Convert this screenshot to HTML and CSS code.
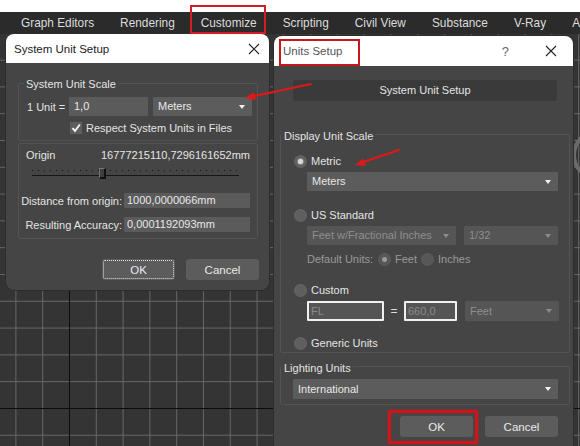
FILE: index.html
```
<!DOCTYPE html>
<html>
<head>
<meta charset="utf-8">
<link rel="stylesheet" href="styles.css">
</head>
<body>
<div class="topstrip"></div>
<nav class="menu">
  <span>Graph Editors</span>
  <span>Rendering</span>
  <span class="marked">Customize</span>
  <span>Scripting</span>
  <span>Civil View</span>
  <span>Substance</span>
  <span>V-Ray</span>
  <span>A</span>
</nav>
<div class="viewport">
  <div class="axis-v"></div>
  <div class="axis-h"></div>

  <section class="dlg dlg1">
    <header class="titlebar">
      <span class="title">System Unit Setup</span>
      <svg class="xicon" width="12" height="12" viewBox="0 0 12 12"><path d="M1 1L11 11M11 1L1 11" stroke="#222" stroke-width="1.1" fill="none"/></svg>
    </header>
    <div class="body1">
      <div class="group g1">
        <div class="glabel">System Unit Scale</div>
        <div class="row unit-row">
          <span class="unit-lbl">1 Unit =</span>
          <div class="field f-unit">1,0</div>
          <div class="combo c-meters">Meters<i class="tri"></i></div>
        </div>
        <div class="row check-row">
          <span class="cbox"><svg width="12" height="12" viewBox="0 0 12 12"><path d="M2.5 6.2L5 9L9.8 2.5" stroke="#f0f0f0" stroke-width="2" fill="none"/></svg></span>
          <span>Respect System Units in Files</span>
        </div>
      </div>
      <div class="group g2">
        <div class="row origin-row">
          <span>Origin</span>
          <span>16777215110,7296161652mm</span>
        </div>
        <div class="slider">
          <div class="dots"></div>
          <div class="track"></div>
          <div class="thumb"></div>
        </div>
        <div class="row info-row r-dist">
          <span class="info-lbl">Distance from origin:</span>
          <div class="field f-info">1000,0000066mm</div>
        </div>
        <div class="row info-row r-acc">
          <span class="info-lbl">Resulting Accuracy:</span>
          <div class="field f-info">0,0001192093mm</div>
        </div>
      </div>
      <div class="buttons b1">
        <button class="btn focus">OK</button>
        <button class="btn">Cancel</button>
      </div>
    </div>
  </section>

  <section class="dlg dlg2">
    <header class="titlebar tb2">
      <span class="title">Units Setup</span>
      <span class="help">?</span>
      <svg class="xicon x2" width="12" height="12" viewBox="0 0 12 12"><path d="M1 1L11 11M11 1L1 11" stroke="#222" stroke-width="1.1" fill="none"/></svg>
    </header>
    <div class="body2">
      <div class="sus-btn">System Unit Setup</div>
      <div class="group g3">
        <div class="glabel">Display Unit Scale</div>
        <div class="row radio-row r-metric"><span class="radio on"></span><span>Metric</span></div>
        <div class="combo c-wide">Meters<i class="tri"></i></div>
        <div class="row radio-row r-us"><span class="radio"></span><span>US Standard</span></div>
        <div class="row sub-row r-feet">
          <div class="combo dis c-frac">Feet w/Fractional Inches<i class="tri dim"></i></div>
          <div class="combo dis c-small">1/32<i class="tri dim"></i></div>
        </div>
        <div class="row sub-row r-def">
          <span class="dim-txt">Default Units:</span>
          <span class="radio sm on dimr"></span><span class="dim-txt">Feet</span>
          <span class="radio sm dimr"></span><span class="dim-txt">Inches</span>
        </div>
        <div class="row radio-row r-custom"><span class="radio"></span><span>Custom</span></div>
        <div class="row sub-row r-cust">
          <div class="field boxed f-fl">FL</div>
          <span class="eq">=</span>
          <div class="field boxed f-660">660,0</div>
          <div class="combo dis c-small">Feet<i class="tri dim"></i></div>
        </div>
        <div class="row radio-row r-gen"><span class="radio"></span><span>Generic Units</span></div>
      </div>
      <div class="group g4">
        <div class="glabel">Lighting Units</div>
        <div class="combo c-light">International<i class="tri"></i></div>
      </div>
      <div class="buttons b2">
        <button class="btn btn-ok2">OK</button>
        <button class="btn">Cancel</button>
      </div>
    </div>
  </section>
  <div class="viewcube"></div>
</div>

<svg class="arrows" width="580" height="446" viewBox="0 0 580 446">
  <line x1="311" y1="84" x2="252" y2="96.5" stroke="#e01818" stroke-width="2.2" stroke-linecap="round"/>
  <polygon points="245,98 254,92 256,100" fill="#e01818"/>
  <line x1="399" y1="150" x2="362" y2="162.5" stroke="#e01818" stroke-width="2.2" stroke-linecap="round"/>
  <polygon points="355,165 363,158.5 366,166" fill="#e01818"/>
</svg>
</body>
</html>
```
FILE: styles.css
```
* { box-sizing: border-box; }
body {
  margin: 0;
  width: 580px;
  height: 446px;
  overflow: hidden;
  position: relative;
  background: #333;
  font-family: "Liberation Sans", Arial, sans-serif;
  font-size: 10.5px;
  color: #e4e4e4;
}
.topstrip { height: 12px; background: #fff; }
.menu {
  height: 22px;
  background: #2b2b2b;
  display: flex;
  align-items: center;
  gap: 26px;
  padding-left: 21px;
  font-size: 11.85px;
  color: #dcdcdc;
  white-space: nowrap;
  position: relative;
  z-index: 3;
}
.marked { position: relative; }
.marked::after {
  content: "";
  position: absolute;
  left: -11px; right: -9px; top: -11px; bottom: -4px;
  border: 2px solid #d41c22;
}
.viewport {
  position: relative;
  height: 412px;
  overflow: hidden;
  background-color: #343434;
  background-image:
    linear-gradient(to right, #666 1px, transparent 1px),
    linear-gradient(to bottom, #666 1px, transparent 1px);
  background-size: 26.8px 26.8px;
  background-position: 15.4px 25.6px;
}
.axis-v { position: absolute; left: 69px; top: 0; bottom: 0; width: 1px; background: #0c0c0c; }
.axis-h { position: absolute; left: 0; right: 0; top: 374px; height: 1px; background: #0c0c0c; }
.viewcube {
  position: absolute;
  left: 572px; top: 98px;
  width: 40px; height: 46px;
  border-radius: 50%;
  border: 4px solid #6a6a6a;
}

.dlg {
  position: absolute;
  background: #454545;
  border-radius: 8px;
  overflow: hidden;
  box-shadow: 0 0 0 1px #2d2d2d;
  z-index: 1;
}
.dlg1 { left: 6px; top: 0; width: 263px; height: 256px; }
.dlg2 { left: 274px; top: 2px; width: 299px; height: 430px; }
.titlebar {
  background: #fff;
  height: 29px;
  display: flex;
  align-items: center;
  padding-left: 8px;
  color: #1a1a1a;
  font-size: 11.5px;
  position: relative;
}
.tb2 { height: 30px; padding-left: 9px; }
.tb2::before {
  content: "";
  position: absolute;
  left: 5px; top: 3px; width: 77px; height: 23px;
  border: 2px solid #c8161c;
}
.title { flex: 1; color: #222; }
.tb2 .title { color: #555; }
.xicon { margin-right: 9px; }
.help { color: #666; font-size: 13px; margin-right: 36px; }
.x2 { margin-right: 16px; }

.group {
  border: 1px solid #535353;
  border-radius: 2px;
}
.glabel {
  margin-top: -7px;
  height: 14px;
  line-height: 14px;
  font-size: 11px;
  background: #454545;
  width: max-content;
  padding: 0 2px;
}
.row { display: flex; align-items: center; }

/* dialog 1 */
.body1 { padding: 20px 11px 0 12px; }
.g1 { height: 58px; }
.g1 .glabel { margin-left: 5px; }
.unit-row { margin-top: 6px; height: 19px; padding-left: 8px; }
.unit-lbl { width: 42px; font-size: 11px; }
.field {
  background: #5b5b5b;
  height: 19px;
  line-height: 19px;
  padding-left: 5px;
  font-size: 11px;
  color: #e8e8e8;
  border-radius: 1px;
}
.f-unit { width: 79px; margin-right: 5px; }
.combo {
  position: relative;
  background: #5c5c5c;
  height: 19px;
  line-height: 19px;
  padding-left: 5px;
  font-size: 11px;
  color: #e8e8e8;
  border-radius: 1px;
}
.tri {
  position: absolute;
  right: 7px; top: 8px;
  width: 0; height: 0;
  border-left: 3.5px solid transparent;
  border-right: 3.5px solid transparent;
  border-top: 4px solid #f2f2f2;
}
.tri.dim { border-top-color: #8c8c8c; }
.c-meters { width: 99px; }
.check-row { margin-top: 6px; height: 12px; padding-left: 51px; gap: 4px; font-size: 11px; }
.cbox { width: 12px; height: 12px; background: #5e5e5e; display: flex; }

.g2 { height: 96px; margin-top: 2px; padding: 4px 7px 0 0; }
.origin-row { justify-content: space-between; height: 14px; padding-left: 7px; font-size: 11px; }
.slider { position: relative; height: 12px; margin: 5px 11px 0 13px; }
.dots {
  position: absolute; left: 0; right: 0; top: 3px; height: 1px;
  background-image: linear-gradient(to right, #111 1px, transparent 1px);
  background-size: 6px 1px;
}
.track { position: absolute; left: 0; right: 0; top: 8px; height: 1px; background: #161616; }
.thumb {
  position: absolute; left: 67px; top: 1px; width: 7px; height: 11px;
  background: #3e3e3e;
  border-right: 2px solid #111;
  border-bottom: 2px solid #111;
  border-left: 1px solid #777;
  border-top: 1px solid #777;
}
.info-row { height: 15px; }
.r-dist { margin-top: 14px; }
.r-acc { margin-top: 9px; }
.info-lbl { width: 103px; text-align: right; margin-right: 2px; font-size: 11px; white-space: nowrap; }
.f-info { width: 126px; height: 15px; line-height: 15px; padding-left: 3px; }

.buttons { display: flex; justify-content: flex-end; }
.b1 { margin-top: 20px; gap: 11px; margin-right: -1px; }
.btn {
  width: 73px;
  height: 21px;
  background: #5c5c5c;
  border: none;
  border-radius: 3px;
  color: #eaeaea;
  font-family: "Liberation Sans", Arial, sans-serif;
  font-size: 11.5px;
  padding: 0;
  position: relative;
}
.btn.focus { outline: 1px dotted #e0e0e0; outline-offset: -2px; }

/* dialog 2 */
.body2 { padding: 14px 3px 0 6px; }
.sus-btn {
  margin: 0 13px;
  height: 21px;
  line-height: 21px;
  background: #3a3a3a;
  border-radius: 3px;
  text-align: center;
  font-size: 11px;
}
.g3 { margin-top: 33px; height: 219px; }
.g3 .glabel, .g4 .glabel { margin-left: 1px; margin-top: -6px; }
.radio-row { height: 14px; padding-left: 13px; gap: 4px; font-size: 11px; }
.radio {
  width: 13px; height: 13px; border-radius: 50%;
  background: #5f5f5f;
  border: 1px solid #666;
  position: relative;
  flex: none;
}
.radio.on::after {
  content: "";
  position: absolute; left: 3px; top: 3px; width: 5px; height: 5px;
  border-radius: 50%; background: #d8d8d8;
  box-shadow: 0 0 2px #fff;
}
.radio.sm.on::after { background: #9a9a9a; box-shadow: none; }
.r-metric { margin-top: 11px; }
.c-wide { margin: 4px 0 0 26px; width: 251px; }
.r-us { margin-top: 17px; }
.sub-row { padding-left: 26px; }
.r-feet { margin-top: 4px; gap: 8px; }
.dis { background: #555; color: #8e8e8e; }
.c-frac { width: 149px; }
.c-small { width: 94px; }
.r-def { margin-top: 7px; height: 14px; font-size: 11px; }
.dim-txt { color: #9a9a9a; }
.r-def .dimr { margin: 0 4px 0 4px; background: #575757; border-color: #5c5c5c; }
.r-def .dimr:nth-of-type(2) { margin-left: 5px; }
.r-custom { margin-top: 17px; }
.r-cust { margin-top: 4px; height: 20px; }
.boxed {
  height: 20px;
  line-height: 16px;
  border: 2px solid #f0f0f0;
  background: #555;
  color: #8a8a8a;
  padding-left: 2px;
}
.f-fl { width: 77px; }
.eq { width: 20px; text-align: center; font-size: 12px; color: #ddd; }
.f-660 { width: 53px; margin-right: 8px; }
.r-cust .c-small { height: 20px; line-height: 20px; }
.r-gen { margin-top: 15px; }

.g4 { margin-top: 13px; height: 39px; }
.c-light { margin: 4px 0 0 12px; width: 265px; height: 20px; line-height: 20px; }
.c-light .tri { top: 8px; }
.b2 { margin-top: 11px; gap: 12px; margin-right: 12px; }
.btn-ok2::after {
  content: "";
  position: absolute;
  left: -12px; right: -5px; top: -6px; bottom: -7px;
  border: 3px solid #d0141a;
  border-radius: 2px;
  box-shadow: 0 0 3px rgba(230,20,20,0.6);
}

.arrows { position: absolute; left: 0; top: 0; pointer-events: none; z-index: 4; }
```
